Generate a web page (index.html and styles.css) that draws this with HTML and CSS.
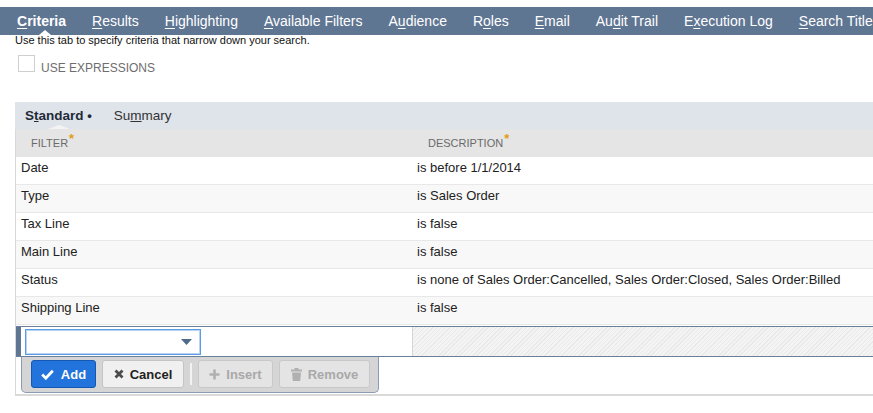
FILE: index.html
```html
<!DOCTYPE html>
<html lang="en">
<head>
<meta charset="utf-8">
<title>Criteria</title>
<link rel="stylesheet" href="styles.css">
</head>
<body>
<nav class="tabbar">
  <a class="tab active"><u>C</u>riteria</a>
  <a class="tab"><u>R</u>esults</a>
  <a class="tab"><u>H</u>ighlighting</a>
  <a class="tab"><u>A</u>vailable Filters</a>
  <a class="tab">A<u>u</u>dience</a>
  <a class="tab">R<u>o</u>les</a>
  <a class="tab"><u>E</u>mail</a>
  <a class="tab">Au<u>d</u>it Trail</a>
  <a class="tab">E<u>x</u>ecution Log</a>
  <a class="tab"><u>S</u>earch Title</a>
</nav>
<p class="help">Use this tab to specify criteria that narrow down your search.</p>
<label class="expr"><span class="cb"></span><span class="expr-label">USE EXPRESSIONS</span></label>
<div class="subtabs">
  <a class="stab active">S<u>t</u>andard <span class="dot">•</span></a>
  <a class="stab">Su<u>m</u>mary</a>
</div>
<div class="grid">
  <div class="row head">
    <div class="hcell first">FILTER<span class="req">*</span></div>
    <div class="hcell second">DESCRIPTION<span class="req">*</span></div>
  </div>
  <div class="row"><div class="cell">Date</div><div class="cell">is before 1/1/2014</div></div>
  <div class="row alt"><div class="cell">Type</div><div class="cell">is Sales Order</div></div>
  <div class="row"><div class="cell">Tax Line</div><div class="cell">is false</div></div>
  <div class="row alt"><div class="cell">Main Line</div><div class="cell">is false</div></div>
  <div class="row"><div class="cell">Status</div><div class="cell">is none of Sales Order:Cancelled, Sales Order:Closed, Sales Order:Billed</div></div>
  <div class="row alt"><div class="cell">Shipping Line</div><div class="cell">is false</div></div>
  <div class="editrow">
    <div class="ecell">
      <div class="select">
        <svg class="caret" width="11" height="6" viewBox="0 0 11 6"><polygon points="0,0 11,0 5.5,6" fill="#4f6b8c"/></svg>
      </div>
    </div>
    <div class="hatch"></div>
  </div>
  <div class="btnbar">
    <button class="btn add"><svg width="13" height="11" viewBox="0 0 13 11"><path d="M1.2 5.6 L4.8 9.2 L11.8 1.8" stroke="#fff" stroke-width="2.8" fill="none"/></svg>Add</button>
    <button class="btn cancel"><svg width="10" height="10" viewBox="0 0 10 10"><path d="M1.5 1.5 L8.5 8.5 M8.5 1.5 L1.5 8.5" stroke="#4a4a4a" stroke-width="2.8"/></svg>Cancel</button>
    <span class="sep"></span>
    <button class="btn dis insert"><svg width="11" height="11" viewBox="0 0 11 11"><path d="M5.5 0.5 V10.5 M0.5 5.5 H10.5" stroke="#b0b0b0" stroke-width="2.6"/></svg>Insert</button>
    <button class="btn dis remove"><svg width="11" height="13" viewBox="0 0 11 13"><rect x="0" y="1.5" width="11" height="2" fill="#b0b0b0"/><rect x="3.5" y="0" width="4" height="2" fill="#b0b0b0"/><polygon points="1,4.5 10,4.5 9.2,13 1.8,13" fill="#b0b0b0"/></svg>Remove</button>
  </div>
</div>
</body>
</html>
```
FILE: styles.css
```css
* { box-sizing: border-box; }
html, body { margin: 0; }
body {
  font-family: "Liberation Sans", Arial, sans-serif;
  background: #fff;
  color: #222;
  width: 873px;
  height: 413px;
  overflow: hidden;
  padding-top: 7px;
}
.tabbar {
  display: flex;
  height: 28px;
  background: #5f7693;
  padding-left: 4px;
  white-space: nowrap;
  overflow: hidden;
}
.tab {
  position: relative;
  flex: none;
  color: #fff;
  font-size: 14px;
  line-height: 17px;
  padding: 6px 13px 5px;
  text-decoration: none;
}
.tab u { text-decoration-thickness: 1px; text-underline-offset: 2px; }
.tab.active { font-weight: bold; }
.tab.active::after {
  content: "";
  position: absolute;
  left: 50%;
  bottom: 0;
  margin-left: -3px;
  border-left: 6px solid transparent;
  border-right: 6px solid transparent;
  border-bottom: 5px solid #fff;
}
.help {
  margin: 0 0 0 15px;
  font-size: 11px;
  line-height: 11px;
  color: #111;
}
.expr {
  display: flex;
  gap: 6px;
  height: 17px;
  margin: 9px 0 0 18px;
}
.cb {
  width: 17px;
  height: 17px;
  border: 1px solid #cfcfcf;
  background: #fff;
}
.expr-label {
  font-size: 12px;
  line-height: 12px;
  padding-top: 7px;
  color: #6e6e6e;
}
.subtabs {
  display: flex;
  height: 27px;
  margin: 30px 0 0 15px;
  background: #dfe4eb;
}
.stab {
  position: relative;
  font-size: 13.5px;
  line-height: 16px;
  padding: 6px 11px 0 10px;
  color: #333;
}
.stab.active { font-weight: bold; color: #1f2a38; }
.stab + .stab { padding-left: 11px; padding-right: 12px; }
.stab.active::after {
  content: "";
  position: absolute;
  left: 33px;
  bottom: 0;
  border-left: 11px solid transparent;
  border-right: 11px solid transparent;
  border-bottom: 4px solid #f3f3f3;
}
.dot { font-size: 13px; }
.grid {
  margin-left: 15px;
  border-left: 1px solid #d8d8d8;
  border-bottom: 2px solid #dadada;
  padding-bottom: 1px;
}
.row {
  display: grid;
  grid-template-columns: 396px 1fr;
  height: 28px;
  border-bottom: 1px solid #e8e8e8;
}
.row.alt { background: #f8f8f8; }
.row.head {
  background: #e5e5e5;
  border-bottom: 0;
}
.hcell {
  font-size: 11px;
  line-height: 13px;
  padding-top: 8px;
  color: #6a6a6a;
}
.hcell.first { padding-left: 15px; }
.hcell.second { padding-left: 16px; }
.req {
  color: #e39b17;
  font-size: 13px;
  font-weight: bold;
  line-height: 0;
  vertical-align: 4px;
  margin-left: 1px;
}
.cell {
  font-size: 13px;
  line-height: 16px;
  padding: 3px 5px;
  color: #222;
  white-space: nowrap;
}
.editrow {
  display: grid;
  grid-template-columns: 396px 1fr;
  height: 31px;
  border-top: 1px solid #6a7f9a;
  border-bottom: 1px solid #6a7f9a;
  margin-top: 1px;
}
.ecell {
  display: flex;
  align-items: center;
  border-left: 5px solid #5f7693;
  padding-left: 4px;
}
.select {
  position: relative;
  width: 176px;
  height: 26px;
  border: 1px solid #5d9be4;
  box-shadow: inset 0 0 0 1px #b9d4f3;
  background: #fff;
}
.caret {
  position: absolute;
  right: 8px;
  top: 9px;
}
.hatch {
  border-left: 1px solid #d6d6d6;
  background: repeating-linear-gradient(135deg, #f4f4f4 0 2px, #e9e9e9 2px 3px);
}
.btnbar {
  display: flex;
  align-items: center;
  gap: 6px;
  width: 358px;
  height: 36px;
  margin-left: 5px;
  padding: 3px 9px 4px 9px;
  background: #d5d5d5;
  border: 1px solid #8a9bb3;
  border-top: 0;
  border-radius: 0 0 5px 5px;
}
.btn {
  display: flex;
  flex: none;
  align-items: center;
  justify-content: center;
  gap: 6px;
  height: 28px;
  padding: 0;
  border-radius: 3px;
  font-family: "Liberation Sans", Arial, sans-serif;
  font-size: 13px;
  font-weight: bold;
}
.btn.add {
  width: 65px;
  background: #2373dc;
  border: 1px solid #1558b3;
  color: #fff;
  gap: 7px;
}
.btn.cancel {
  width: 82px;
  background: #f0f0f0;
  border: 1px solid #c4c4c4;
  color: #222;
}
.btn.dis {
  background: #e4e4e4;
  border: 1px solid #c8c8c8;
  color: #a9a9a9;
}
.btn.insert { width: 75px; }
.btn.remove { width: 91px; }
.sep {
  flex: none;
  width: 2px;
  height: 22px;
  background: #f2f2f2;
}
```
